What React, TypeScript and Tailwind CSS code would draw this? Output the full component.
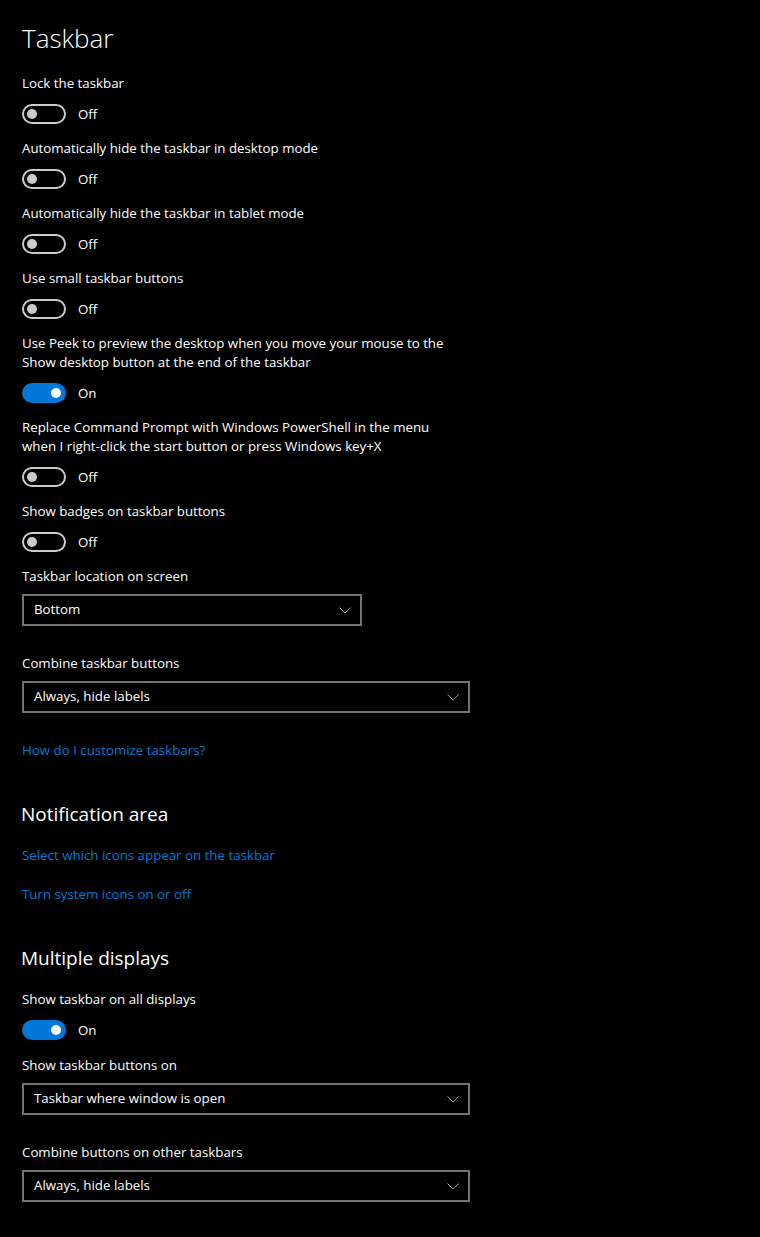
import React, { useState } from 'react';

const font = { fontFamily: '"Segoe UI", "Open Sans", "Noto Sans", sans-serif' };

const Toggle: React.FC<{ on: boolean; onChange: () => void }> = ({ on, onChange }) => (
    <button onClick={onChange} className="flex items-center gap-3 h-5">
        {on ? (
            <span className="flex items-center justify-end w-11 h-5 rounded-full bg-[#0078d7] pr-[5px]">
                <span className="w-[10px] h-[10px] rounded-full bg-white" />
            </span>
        ) : (
            <span className="flex items-center w-11 h-5 rounded-full border-2 border-[#cccccc] pl-[3px]">
                <span className="w-[10px] h-[10px] rounded-full bg-[#cccccc]" />
            </span>
        )}
        <span className="text-[13.3px] leading-5 text-white">{on ? 'On' : 'Off'}</span>
    </button>
);

const ToggleSetting: React.FC<{ label: string; initial: boolean }> = ({ label, initial }) => {
    const [on, setOn] = useState(initial);
    return (
        <div className="pb-[15px]">
            <p className="text-[13.3px] leading-[19px] text-white max-w-[430px]">{label}</p>
            <div className="mt-[11px]">
                <Toggle on={on} onChange={() => setOn(v => !v)} />
            </div>
        </div>
    );
};

const Chevron = () => (
    <svg width="12" height="7" viewBox="0 0 12 7" fill="none">
        <polyline points="0.5,0.5 6,6 11.5,0.5" stroke="#9a9a9a" strokeWidth="1" />
    </svg>
);

const Dropdown: React.FC<{ label: string; value: string; width: string }> = ({ label, value, width }) => (
    <div>
        <p className="text-[13.3px] leading-[19px] text-white">{label}</p>
        <div className={`mt-2 h-8 border-2 border-[#737373] flex items-center justify-between pl-[10px] pr-[9px] ${width}`}>
            <span className="text-[13.3px] text-white">{value}</span>
            <Chevron />
        </div>
    </div>
);

const Link: React.FC<{ children: React.ReactNode }> = ({ children }) => (
    <a href="#" className="block text-[13.3px] leading-[19px] text-[#0078d7]">{children}</a>
);

const App: React.FC = () => {
    return (
        <div className="min-h-screen bg-black text-white pl-[22px] pt-[18px]" style={font}>
            <h1 className="text-[26px] leading-[40px] font-light">Taskbar</h1>

            <div className="mt-[16px]">
                <ToggleSetting label="Lock the taskbar" initial={false} />
                <ToggleSetting label="Automatically hide the taskbar in desktop mode" initial={false} />
                <ToggleSetting label="Automatically hide the taskbar in tablet mode" initial={false} />
                <ToggleSetting label="Use small taskbar buttons" initial={false} />
                <ToggleSetting label="Use Peek to preview the desktop when you move your mouse to the Show desktop button at the end of the taskbar" initial={true} />
                <ToggleSetting label="Replace Command Prompt with Windows PowerShell in the menu when I right-click the start button or press Windows key+X" initial={false} />
                <ToggleSetting label="Show badges on taskbar buttons" initial={false} />
            </div>

            <Dropdown label="Taskbar location on screen" value="Bottom" width="w-[340px]" />
            <div className="mt-[28px]">
                <Dropdown label="Combine taskbar buttons" value="Always, hide labels" width="w-[448px]" />
            </div>
            <div className="mt-[28px]">
                <Link>How do I customize taskbars?</Link>
            </div>

            <h2 className="mt-[40px] -ml-px text-[19px] leading-[28px]">Notification area</h2>
            <div className="mt-[18px]">
                <Link>Select which icons appear on the taskbar</Link>
            </div>
            <div className="mt-[20px]">
                <Link>Turn system icons on or off</Link>
            </div>

            <h2 className="mt-[40px] -ml-px text-[19px] leading-[28px]">Multiple displays</h2>
            <div className="mt-[18px]">
                <ToggleSetting label="Show taskbar on all displays" initial={true} />
            </div>
            <div className="mt-px">
                <Dropdown label="Show taskbar buttons on" value="Taskbar where window is open" width="w-[448px]" />
            </div>
            <div className="mt-[28px]">
                <Dropdown label="Combine buttons on other taskbars" value="Always, hide labels" width="w-[448px]" />
            </div>
        </div>
    );
};

export default App;
